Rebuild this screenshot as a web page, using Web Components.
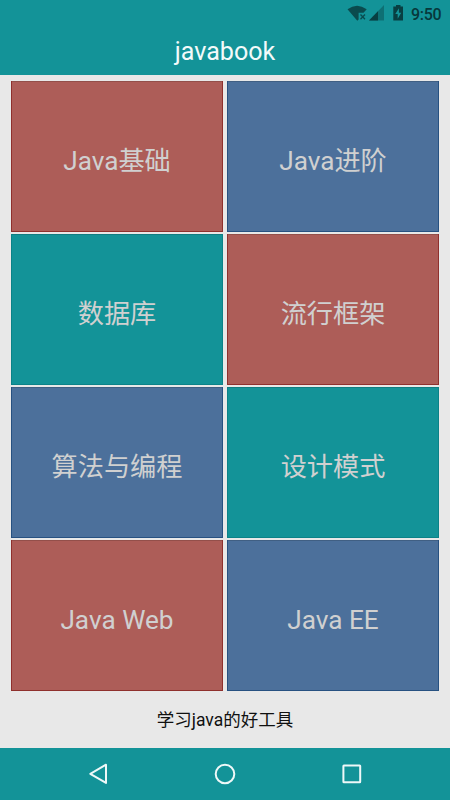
<!DOCTYPE html>
<html lang="zh-CN">
<head>
<meta charset="utf-8">
<title>javabook</title>
<style>
html,body{margin:0;height:100%}
body{font-family:Roboto,"Noto Sans CJK SC",sans-serif;background:#e8e8e8;overflow:hidden}
</style>
</head>
<body>
<book-app></book-app>
<script>
const define = (name, html) => customElements.define(name, class extends HTMLElement {
  constructor() {
    super();
    this.attachShadow({ mode: 'open' }).innerHTML = html;
  }
});

define('status-bar', `
<style>
:host{display:flex;height:28px;box-sizing:border-box;padding-right:9px;justify-content:flex-end;align-items:center;color:#07383b}
svg{display:block;width:62px;height:28px;margin-right:3px}
span{font-size:16px;line-height:28px;padding-top:1px;font-weight:500;width:30px;white-space:nowrap;letter-spacing:-.3px}
</style>
<svg viewBox="346 0 62 28">
  <path d="M347.500 9.300Q357 2 366.700 9.300L363.500 12.800H358.600V19.500L357.300 20.700Z" fill="#0a4b4e"/>
  <path d="M360.500 14.500L365 19.200M365 14.500L360.500 19.200" stroke="#0a4b4e" stroke-width="1.300"/>
  <path d="M384 5V20.500H369Z" fill="#0e7074"/>
  <path d="M378 11.200V20.500H369Z" fill="#083f42"/>
  <path d="M393.300 6.500H396V5H400.500V6.500H403V20.500H393.300Z" fill="#083f42"/>
  <path d="M398.900 8.300L395.300 14.100H397.700V18.700L401.200 12.800H398.900Z" fill="#149499"/>
</svg>
<span><slot></slot></span>`);

define('title-bar', `
<style>
:host{display:block;height:46.500px;text-align:center;font-size:25.100px;line-height:48px;color:#f2fafa}
</style><slot></slot>`);

define('topic-tile', `
<style>
:host{display:flex;align-items:center;justify-content:center;box-sizing:border-box;padding-top:8px;
font-size:26.200px;line-height:36px;color:#d0d0d0;background:var(--fill);white-space:nowrap;
box-shadow:inset 1px 0 var(--edge),inset -1px -1px var(--edge),inset 0 1px #00000026}
:host([tone=red]){--fill:#ad5d58;--edge:#8f302d}
:host([tone=blue]){--fill:#4c709b;--edge:#275181}
:host([tone=teal]){--fill:#139398;--edge:#0b8288}
</style><slot></slot>`);

define('topic-grid', `
<style>
:host{display:grid;grid-template-columns:212px 212px;grid-auto-rows:151px;gap:2px 4px;padding:6.500px 11px 0;background:#e8e8e8}
</style><slot></slot>`);

define('tag-line', `
<style>
:host{flex:1;display:flex;align-items:center;justify-content:center;font-size:17.500px;line-height:24px;color:#101010}
</style><slot></slot>`);

define('nav-bar', `
<style>
:host{display:block;height:52px;background:#139398}
svg{display:block}
</style>
<svg width="450" height="52" viewBox="0 748 450 52" fill="none" stroke="#eef8f8" stroke-width="2" stroke-linejoin="round">
  <path d="M106 764.700V782.900L90.300 773.800Z"/>
  <circle cx="225" cy="774" r="9.300"/>
  <rect x="343.400" y="765.400" width="16.800" height="16.800" rx=".5"/>
</svg>`);

define('book-app', `
<style>
:host{display:flex;flex-direction:column;width:450px;height:800px}
header{background:#139398}
</style>
<header>
  <status-bar>9:50</status-bar>
  <title-bar>javabook</title-bar>
</header>
<topic-grid>
  <topic-tile tone="red">Java基础</topic-tile>
  <topic-tile tone="blue">Java进阶</topic-tile>
  <topic-tile tone="teal">数据库</topic-tile>
  <topic-tile tone="red">流行框架</topic-tile>
  <topic-tile tone="blue">算法与编程</topic-tile>
  <topic-tile tone="teal">设计模式</topic-tile>
  <topic-tile tone="red">Java Web</topic-tile>
  <topic-tile tone="blue">Java EE</topic-tile>
</topic-grid>
<tag-line>学习java的好工具</tag-line>
<nav-bar></nav-bar>`);
</script>
</body>
</html>
